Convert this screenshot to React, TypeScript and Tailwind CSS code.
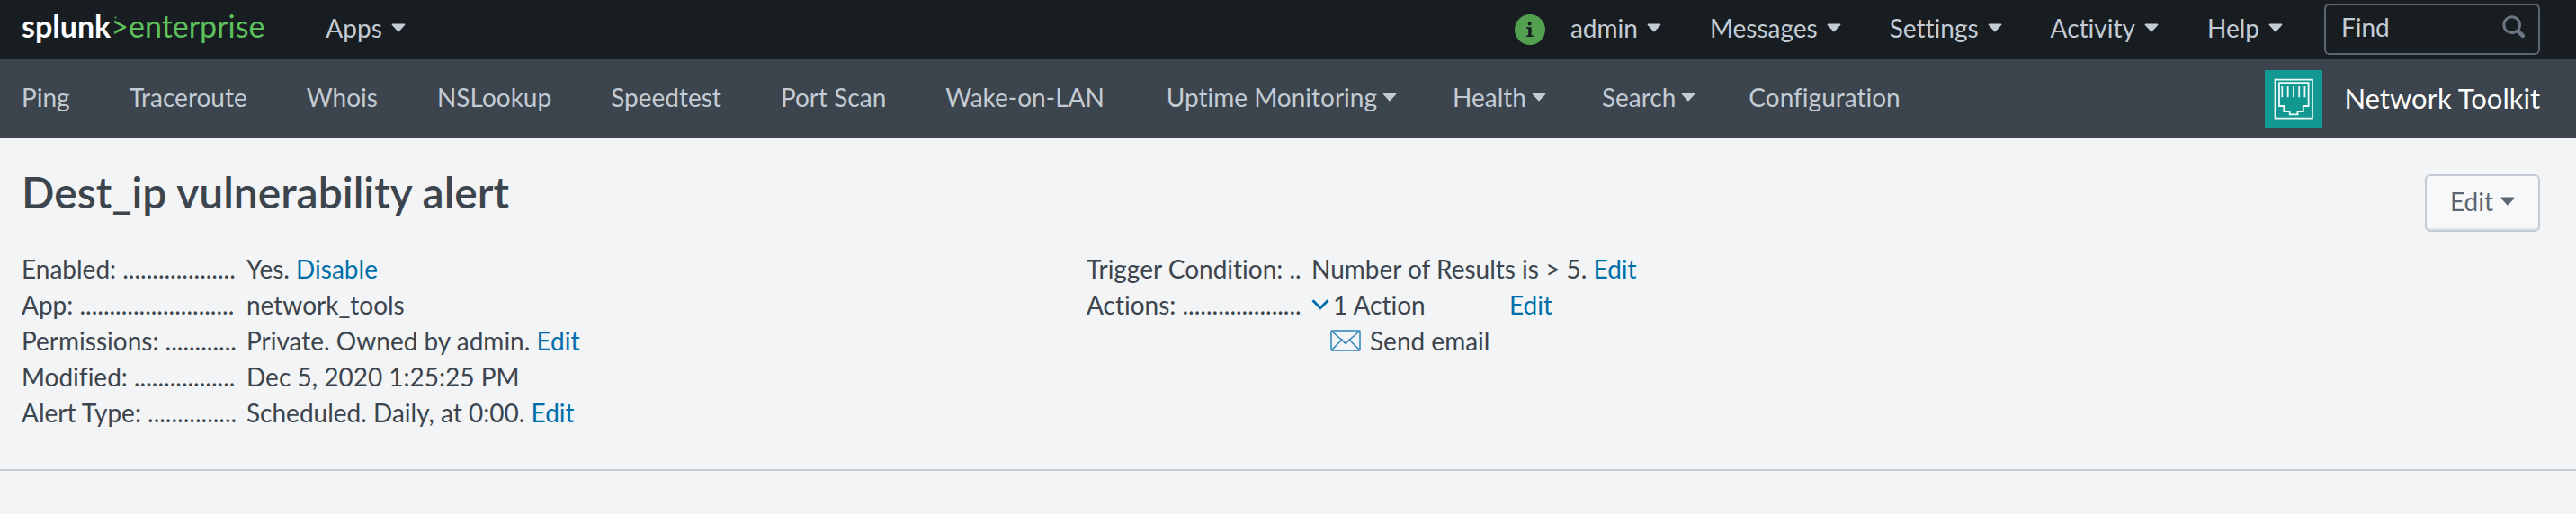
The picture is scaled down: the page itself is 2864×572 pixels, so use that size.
import React from "react";

function Caret() {
  return (
    <svg viewBox="0 0 16 10" className="h-[10px] w-4 shrink-0" fill="currentColor" stroke="currentColor" strokeWidth="2" strokeLinejoin="round" aria-hidden="true">
      <path d="M1.6 1.4h12.8L8 8.4z" />
    </svg>
  );
}

function TopMenu({ label }: { label: string }) {
  return (
    <button type="button" className="flex items-center gap-[10px] whitespace-nowrap">
      {label}
      <Caret />
    </button>
  );
}

function Logo() {
  return (
    <a href="#home" className="relative flex items-baseline pb-2 leading-none">
      <span className="text-[34px] font-bold text-white">splunk</span>
      <span className="text-[34px] text-[#5cc05c]">&gt;enterprise</span>
      <svg viewBox="0 0 4 4" className="absolute top-[6px] left-[103px] size-[3px]" aria-hidden="true">
        <circle cx="2" cy="2" r="1.6" fill="#3f8a45" />
      </svg>
    </a>
  );
}

function InfoIcon() {
  return (
    <svg viewBox="0 0 34 34" className="size-[34px]" aria-hidden="true">
      <circle cx="17" cy="17" r="17" fill="#53a051" />
      <g fill="#171d21">
        <circle cx="16.6" cy="10.6" r="2" />
        <path d="M13 14.3h5.7v9.2h2V25H13v-1.5h2.2v-7.6H13z" />
      </g>
    </svg>
  );
}

function SearchIcon() {
  return (
    <svg viewBox="0 0 26 26" className="size-[26px] shrink-0" fill="none" stroke="#6b7785" aria-hidden="true">
      <circle cx="10.7" cy="10.7" r="8.9" strokeWidth="3" />
      <path d="M17.5 17.5l5.3 5.3" strokeWidth="4.6" strokeLinecap="round" />
    </svg>
  );
}

function PortIcon() {
  return (
    <svg viewBox="0 0 64 64" className="size-16" aria-hidden="true">
      <path fill="#119891" d="M0 0h64v64H0z" />
      <g fill="none" stroke="#f0fafa" strokeWidth="1.8">
        <path d="M11.5 10.7h41.4v43H11.5z" />
        <path d="M16 14.2h32.6V40h-5.8v6h-6.3v3.3h-8.8V46h-6.4v-6H16z" />
        <path d="M19.3 18v12.3M25.7 18v12.3M32 18v12.3M38.2 18v12.3M44.4 18v12.3" />
      </g>
    </svg>
  );
}

function EnvelopeIcon() {
  return (
    <svg viewBox="0 0 34 24" className="h-6 w-[34px]" fill="none" stroke="#2b82b8" strokeWidth="1.5" strokeLinejoin="round" aria-hidden="true">
      <rect x="1" y="1" width="32" height="22" rx="1" />
      <path d="M1.5 1.5l12 10.5 3.5 3.4 3.5-3.4 12-10.5M1.5 22.5l12-12M32.5 22.5l-12-12" />
    </svg>
  );
}

const links = ["Ping", "Traceroute", "Whois", "NSLookup", "Speedtest", "Port Scan", "Wake-on-LAN"];
const menus = ["Uptime Monitoring", "Health", "Search"];

function Row({ label, dots, children }: { label: string; dots: number; children: React.ReactNode }) {
  return (
    <div className="flex">
      <dt className="w-[250px] shrink-0 whitespace-nowrap">
        {label}: {".".repeat(dots)}
      </dt>
      <dd>{children}</dd>
    </div>
  );
}

function Link({ children }: { children: string }) {
  return <a href="#edit" className="text-[#006eaa]">{children}</a>;
}

export default function App() {
  return (
    <div className="min-h-screen bg-[#f2f4f5] font-[Lato,sans-serif] text-[28px] leading-10 text-[#3c444d] [font-variant-ligatures:none]">
      <header className="flex h-[66px] items-center bg-[#171d21] pr-10 pl-6 text-[#c3cbd4]">
        <Logo />
        <div className="ml-[68px] flex-1 pb-1">
          <TopMenu label="Apps" />
        </div>
        <div className="flex items-center gap-[54px]">
          <div className="flex items-center gap-7">
            <InfoIcon />
            <div className="pb-1"><TopMenu label="admin" /></div>
          </div>
          {["Messages", "Settings", "Activity", "Help"].map((m) => (
            <div key={m} className="pb-1"><TopMenu label={m} /></div>
          ))}
        </div>
        <label className="mb-[2px] ml-[46px] flex h-[57px] w-60 items-center rounded-md border-2 border-[#5c6773] pr-[14px] pb-1 pl-[17px]">
          <input type="text" aria-label="Find" placeholder="Find" className="w-full min-w-0 bg-transparent outline-none placeholder:text-[#c3cbd4] placeholder:opacity-100" />
          <SearchIcon />
        </label>
      </header>

      <nav className="flex h-[88px] items-center bg-[#3c444d] pr-10 pl-6 text-[#c3cbd4]">
        <ul className="flex flex-1 items-center gap-[66px] pb-1 whitespace-nowrap">
          {links.map((l) => (
            <li key={l}><a href="#view">{l}</a></li>
          ))}
          {menus.map((m) => (
            <li key={m} className="-mr-[7px] ml-[3px]">
              <button type="button" className="flex items-center gap-[6px]">{m}<Caret /></button>
            </li>
          ))}
          <li><a href="#view">Configuration</a></li>
        </ul>
        <a href="#app" className="flex items-center gap-6 text-[31px] text-white">
          <PortIcon />
          <span className="pb-[2px]">Network Toolkit</span>
        </a>
      </nav>

      <main>
        <div className="flex items-start justify-between pt-8 pr-10 pl-6">
          <h1 className="text-[48px] leading-[56px] font-semibold">Dest_ip vulnerability alert</h1>
          <button type="button" className="mt-2 flex h-16 items-center gap-2 rounded-md border-2 border-[#c3cbd4] bg-[#f7f8fa] px-[26px] pb-1 text-[#5c6773] shadow-[inset_0_-2px_0_#dfe3e7]">
            Edit
            <Caret />
          </button>
        </div>

        <div className="grid grid-cols-[1184px_1fr] border-b-2 border-[#c3cbd4] px-6 pt-[21px] pb-[43px]">
          <dl>
            <Row label="Enabled" dots={19}>Yes. <Link>Disable</Link></Row>
            <Row label="App" dots={26}>network_tools</Row>
            <Row label="Permissions" dots={12}>Private. Owned by admin. <Link>Edit</Link></Row>
            <Row label="Modified" dots={17}>Dec 5, 2020 1:25:25 PM</Row>
            <Row label="Alert Type" dots={15}>Scheduled. Daily, at 0:00. <Link>Edit</Link></Row>
          </dl>
          <dl>
            <Row label="Trigger Condition" dots={2}>Number of Results is &gt; 5. <Link>Edit</Link></Row>
            <Row label="Actions" dots={20}>
              <div className="flex">
                <button type="button" className="flex w-[220px] items-center gap-1">
                  <svg viewBox="0 0 20 12" className="h-3 w-5" fill="none" stroke="#006eaa" strokeWidth="3" aria-hidden="true">
                    <path d="M1.5 1.2l8.5 8.5 8.5-8.5" />
                  </svg>
                  1 Action
                </button>
                <Link>Edit</Link>
              </div>
              <div className="flex items-center gap-[10px] pl-[21px]">
                <EnvelopeIcon />
                Send email
              </div>
            </Row>
          </dl>
        </div>
      </main>
    </div>
  );
}
